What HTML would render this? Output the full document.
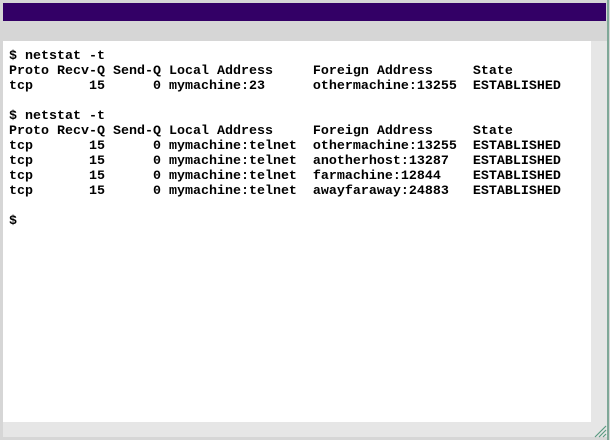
<!DOCTYPE html>
<html><head><style>
html,body{margin:0;padding:0;width:610px;height:440px;background:#d6d6d6;overflow:hidden;position:relative}
#bar{position:absolute;left:3px;top:3px;width:603px;height:18px;background:#330066}
#scr{position:absolute;left:3px;top:41px;width:588px;height:381px;background:#fff}
#rs{position:absolute;left:591px;top:41px;width:16px;height:381px;background:#e6e6e6}
#bot{position:absolute;left:3px;top:422px;width:604px;height:15px;background:#e6e6e6}
#edge{position:absolute;left:607px;top:0;width:2px;height:440px;background:#7fa898}
pre{position:absolute;left:9px;top:49px;margin:0;font-family:"Liberation Mono",monospace;font-weight:bold;font-size:13.33px;line-height:15px;color:#000}
</style></head><body>
<div id="bar"></div><div id="scr"></div><div id="rs"></div><div id="bot"></div><div id="edge"></div>
<svg style="position:absolute;left:594px;top:425px" width="13" height="13"><path d="M12 1L1 12M12 5L5 12M12 9L9 12" stroke="#5a9a80" stroke-width="1.2"/></svg>
<pre>$ netstat -t
Proto Recv-Q Send-Q Local Address     Foreign Address     State
tcp       15      0 mymachine:23      othermachine:13255  ESTABLISHED

$ netstat -t
Proto Recv-Q Send-Q Local Address     Foreign Address     State
tcp       15      0 mymachine:telnet  othermachine:13255  ESTABLISHED
tcp       15      0 mymachine:telnet  anotherhost:13287   ESTABLISHED
tcp       15      0 mymachine:telnet  farmachine:12844    ESTABLISHED
tcp       15      0 mymachine:telnet  awayfaraway:24883   ESTABLISHED

$</pre>
</body></html>
